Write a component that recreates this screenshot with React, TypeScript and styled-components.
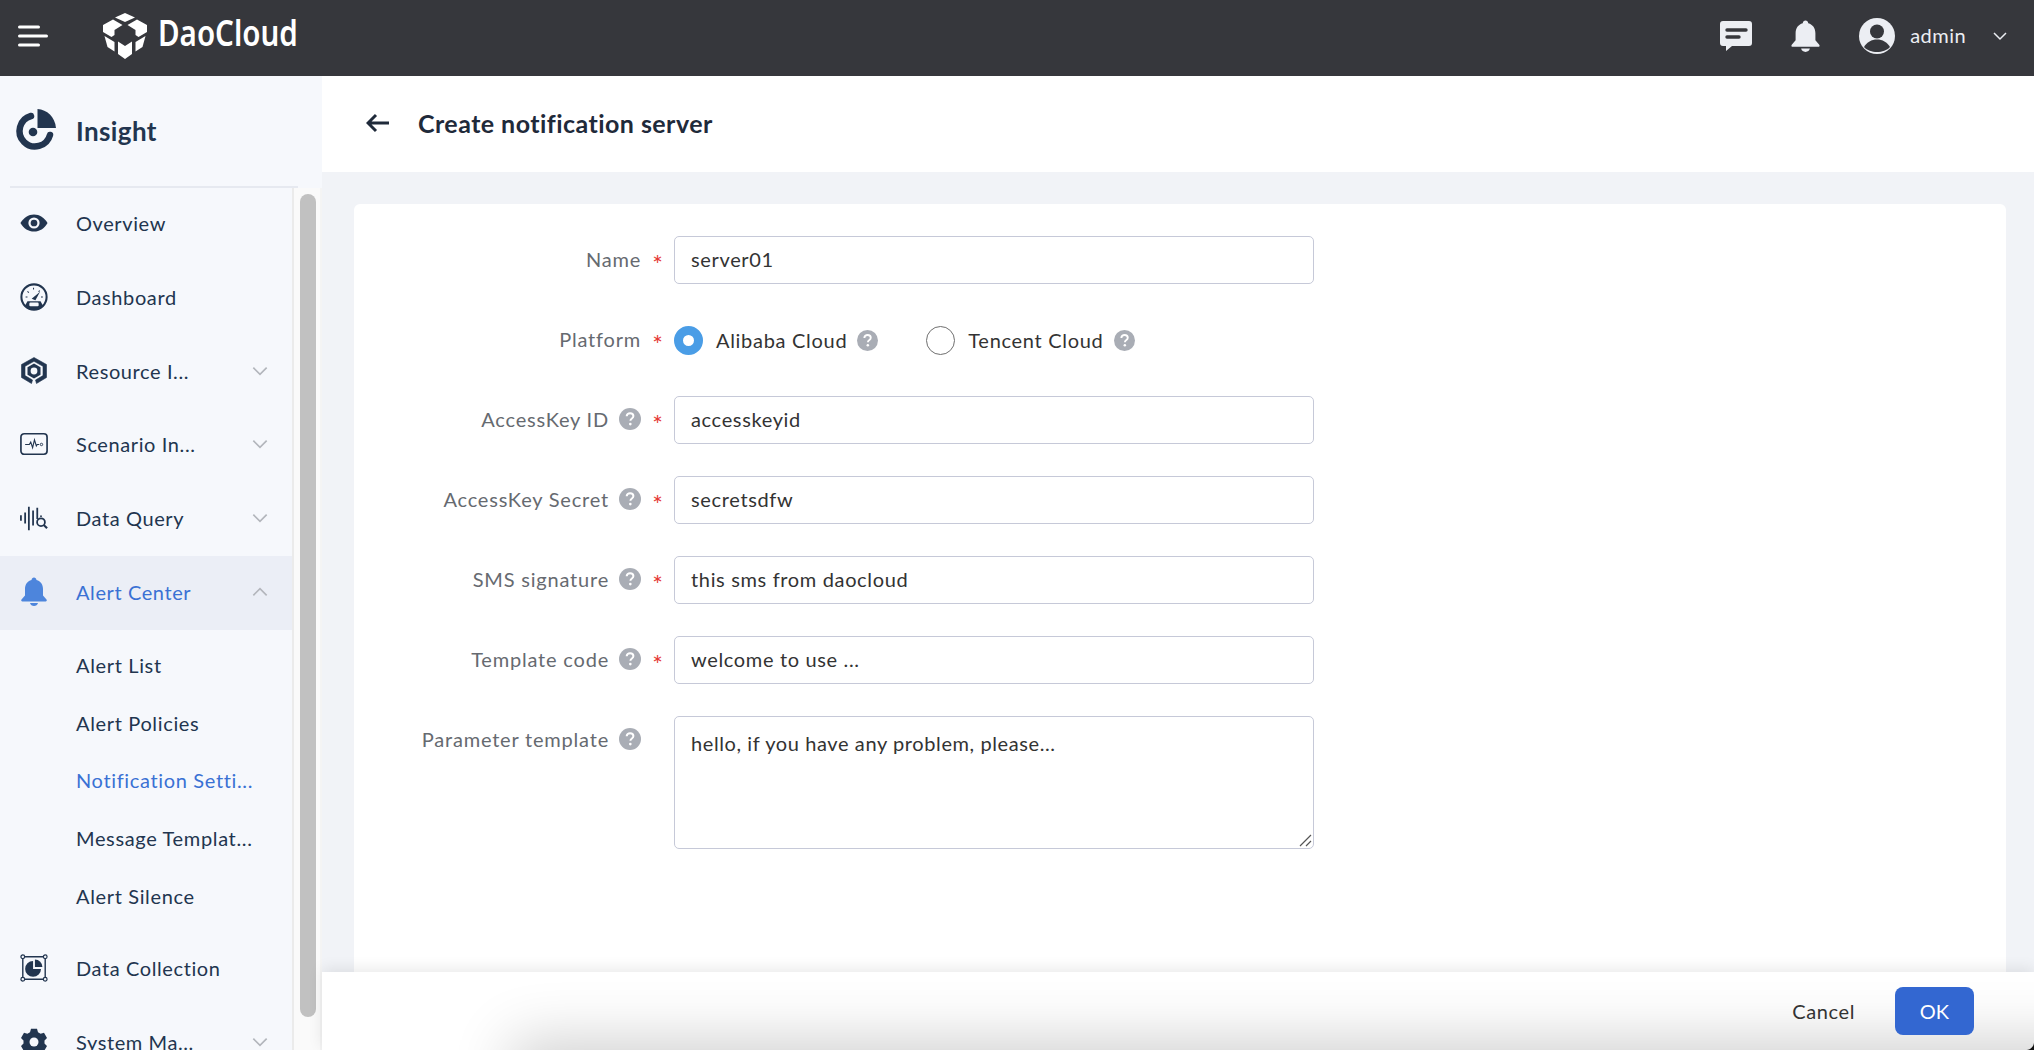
import React from 'react';
import styled, { createGlobalStyle } from 'styled-components';

const Global = createGlobalStyle`
  html, body { margin: 0; padding: 0; height: 100%; overflow: hidden; }
  body { font-family: Lato, "Noto Sans", "Liberation Sans", sans-serif; color: #333; }
  * { box-sizing: border-box; }
`;

const Page = styled.div`
  width: 2034px;
  height: 1050px;
  display: flex;
  flex-direction: column;
  overflow: hidden;
  position: relative;
  background: #f1f3f7;
`;

const TopBar = styled.header`
  height: 76px;
  flex: none;
  background: #36373c;
  display: flex;
  align-items: center;
  padding: 0 25px 4px 18px;
`;

const LogoLink = styled.div`
  display: flex;
  align-items: center;
  margin-left: 55px;
  gap: 11px;
`;

const LogoText = styled.span`
  font-family: "Noto Sans", sans-serif;
  font-size: 36px;
  font-weight: 600;
  line-height: 1;
  color: #fff;
  transform: translateY(-3px) scaleX(0.82);
  transform-origin: left center;
`;

const TopRight = styled.div`
  margin-left: auto;
  display: flex;
  align-items: center;
`;

const ChatIcon = styled.svg`
  margin-right: 38px;
`;

const BellIcon = styled.svg`
  margin-right: 38px;
`;

const AdminName = styled.span`
  font-size: 20px;
  color: #eceef3;
  margin: 0 25px 2px 15px;
  letter-spacing: 0.45px;
`;

const Body = styled.div`
  flex: 1;
  display: flex;
  min-height: 0;
`;

const Side = styled.aside`
  width: 322px;
  flex: none;
  background: #f6f8fc;
  display: flex;
  flex-direction: column;
  min-height: 0;
`;

const Brand = styled.div`
  height: 112px;
  flex: none;
  margin: 0 24px 0 10px;
  border-bottom: 2px solid #e6e9f0;
  display: flex;
  align-items: center;
  gap: 20px;
  padding: 0 0 1px 3px;
`;

const BrandName = styled.span`
  font-size: 26px;
  font-weight: 700;
  color: #22354f;
  letter-spacing: 0.4px;
`;

const NavRow = styled.div`
  flex: 1;
  display: flex;
  min-height: 0;
  overflow: hidden;
`;

const Nav = styled.nav`
  width: 292px;
  flex: none;
`;

const Track = styled.div`
  width: 30px;
  flex: none;
  background: #fafafa;
  border-left: 2px solid #ebebeb;
  border-right: 2px solid #f4f4f4;
  padding: 6px 4px 0 6px;
`;

const Thumb = styled.div`
  height: 823px;
  width: 16px;
  background: #c1c1c1;
  border-radius: 8px;
`;

const NavItem = styled.div<{ $active?: boolean }>`
  height: 73.7px;
  display: flex;
  align-items: center;
  padding: 0 22px 3px 20px;
  color: ${p => (p.$active ? '#3a71d4' : '#22354f')};
  background: ${p => (p.$active ? '#ebeef6' : 'transparent')};
  font-size: 20px;
  letter-spacing: 0.6px;
`;

const NavIcon = styled.span`
  width: 28px;
  height: 28px;
  flex: none;
  margin-right: 28px;
  display: flex;
  align-items: center;
  justify-content: center;
`;

const NavLabel = styled.span`
  flex: 1;
  white-space: nowrap;
`;

const SubItem = styled.div<{ $active?: boolean }>`
  height: 57.7px;
  display: flex;
  align-items: center;
  padding-left: 76px;
  color: ${p => (p.$active ? '#3a71d4' : '#22354f')};
  font-size: 20px;
  letter-spacing: 0.65px;
  white-space: nowrap;
`;

const SubList = styled.div`
  padding-top: 6px;
  padding-bottom: 8px;
`;

const Main = styled.main`
  flex: 1;
  min-width: 0;
  display: flex;
  flex-direction: column;
  position: relative;
`;

const PageHead = styled.div`
  height: 96px;
  flex: none;
  background: #fff;
  display: flex;
  align-items: center;
  padding: 0 0 2px 44px;
  gap: 28px;
`;

const PageTitle = styled.h1`
  margin: 0;
  font-size: 25px;
  font-weight: 700;
  color: #1f2a3a;
  letter-spacing: 0.45px;
`;

const Card = styled.section`
  flex: 1;
  margin: 32px 28px 0 32px;
  background: #fff;
  border-radius: 6px 6px 0 0;
  padding: 32px 0 0;
`;

const Row = styled.div<{ $tall?: boolean }>`
  display: flex;
  align-items: ${p => (p.$tall ? 'flex-start' : 'center')};
  min-height: 48px;
  margin-bottom: 32px;
`;

const LabelCell = styled.label<{ $tall?: boolean }>`
  width: 320px;
  flex: none;
  display: flex;
  justify-content: flex-end;
  align-items: center;
  gap: 10px;
  font-size: 20px;
  color: #666a70;
  padding: 0 6px 2px 0;
  margin-top: ${p => (p.$tall ? '10px' : '0')};
  letter-spacing: 0.8px;
`;

const Star = styled.span<{ $hidden?: boolean }>`
  width: 20px;
  color: #e53935;
  font-size: 25px;
  text-align: center;
  line-height: 1;
  visibility: ${p => (p.$hidden ? 'hidden' : 'visible')};
  margin-left: -3px;
  position: relative;
  top: 5px;
`;

const TextBox = styled.div`
  width: 640px;
  height: 48px;
  border: 1px solid #c6c9d8;
  border-radius: 5px;
  padding: 0 16px 2px;
  display: flex;
  align-items: center;
  font-size: 20px;
  color: #333;
  letter-spacing: 0.65px;
`;

const TextArea = styled.div`
  width: 640px;
  height: 133px;
  border: 1px solid #c6c9d8;
  border-radius: 5px;
  padding: 13px 16px;
  font-size: 20px;
  line-height: 26px;
  color: #333;
  letter-spacing: 0.6px;
  position: relative;
`;

const Grip = styled.svg`
  position: absolute;
  right: 1px;
  bottom: 1px;
`;

const RadioGroup = styled.div`
  display: flex;
  align-items: center;
  font-size: 20px;
  letter-spacing: 0.7px;
  color: #333;
`;

const RadioOption = styled.div`
  display: flex;
  align-items: center;
  margin-right: 48px;
`;

const RadioMark = styled.span<{ $on?: boolean }>`
  width: 29px;
  height: 29px;
  border-radius: 50%;
  flex: none;
  margin-right: 13px;
  background: #fff;
  border: ${p => (p.$on ? '9px solid #4a9de6' : '1px solid #6f6f6f')};
`;

const OptionHelp = styled.span`
  margin-left: 10px;
  display: flex;
`;

const Footer = styled.footer`
  position: absolute;
  left: 0;
  right: 0;
  bottom: 0;
  height: 78px;
  background: #fff;
  box-shadow: 0 -3px 14px rgba(0, 0, 0, 0.09);
  display: flex;
  align-items: center;
  justify-content: flex-end;
  padding: 0 60px 0 0;
  gap: 40px;
  overflow: hidden;
  &::before {
    content: '';
    position: absolute;
    left: 210px;
    right: -60px;
    top: 88px;
    height: 40px;
    box-shadow: 0 0 60px 20px rgba(0, 0, 0, 0.19);
    background: rgba(0, 0, 0, 0.19);
  }
`;

const CancelBtn = styled.span`
  position: relative;
  font-size: 20px;
  color: #333;
  letter-spacing: 0.6px;
`;

const OkBtn = styled.span`
  position: relative;
  width: 79px;
  height: 48px;
  border-radius: 8px;
  background: #3367d1;
  color: #fff;
  font-size: 20px;
  display: flex;
  align-items: center;
  justify-content: center;
`;

const Corner = styled.div`
  position: absolute;
  right: 0;
  bottom: 0;
  width: 8px;
  height: 8px;
  background: radial-gradient(circle at 0 0, transparent 7.5px, #111 8.5px);
`;

const Help = ({ size = 22 }: { size?: number }) => (
  <svg width={size} height={size} viewBox="0 0 20 20">
    <circle cx="10" cy="10" r="10" fill="#a9adb5" />
    <path d="M7 7.6c0-1.8 1.4-2.9 3.1-2.9 1.8 0 3 1.1 3 2.6 0 1.3-.8 1.9-1.6 2.5-.7.5-1.1.9-1.1 1.8" fill="none" stroke="#fff" strokeWidth="1.8" />
    <circle cx="10.3" cy="14.6" r="1.2" fill="#fff" />
  </svg>
);

const Chevron = ({ up, color = '#b3b6bc', size = 20 }: { up?: boolean; color?: string; size?: number }) => (
  <svg width={size} height={size} viewBox="0 0 18 18" fill="none">
    <path d={up ? 'M3 12l6-6 6 6' : 'M3 6l6 6 6-6'} stroke={color} strokeWidth="1.5" />
  </svg>
);

const Navy = '#22354f';

const icons: Record<string, React.ReactNode> = {
  eye: (
    <svg width="30" height="20" viewBox="0 0 30 20">
      <path d="M0.5 10C4 4 9 0.8 15 0.8S26 4 29.5 10C26 16 21 19.2 15 19.2S4 16 0.5 10Z" fill={Navy} />
      <circle cx="15" cy="10" r="6" fill="#f6f8fc" />
      <circle cx="15" cy="10" r="3.6" fill={Navy} />
    </svg>
  ),
  gauge: (
    <svg width="30" height="30" viewBox="0 0 30 30" fill="none">
      <circle cx="15" cy="15" r="13.5" stroke={Navy} strokeWidth="2.2" />
      <path d="M6 15h2M8 9l1.5 1.3M14.5 5v2M21 8l-1 1.5M24.5 15h-2" stroke={Navy} strokeWidth="1.1" />
      <path d="M12.500 17L21.500 9.500l-5 9z" fill={Navy} />
      <path d="M5 25l3-5.500h14l3 5.500c-2.500 2.500-6 4-10 4s-7.500-1.500-10-4z" fill={Navy} />
      <rect x="10" y="21" width="10" height="4" rx="1.200" fill="#f6f8fc" />
    </svg>
  ),
  hex: (
    <svg width="26" height="28" viewBox="0 0 26 28">
      <path d="M13 .5L25.500 7.500V20.500L15.500 26.500 14.500 23 22 18.600V9.300L13 4.300 4 9.300V18.600L11.500 23 10.500 26.500 .5 20.500V7.500Z" fill={Navy} stroke={Navy} strokeWidth=".6" />
      <path d="M13 6.500l6.500 3.700v7.500L13 21.500l-6.500-3.800v-7.500z" fill={Navy} />
      <circle cx="13" cy="14" r="3.400" fill="#f6f8fc" />
    </svg>
  ),
  monitor: (
    <svg width="30" height="24" viewBox="0 0 30 24" fill="none">
      <rect x="1" y="1" width="28" height="22" rx="3.500" stroke={Navy} strokeWidth="1.800" />
      <path d="M5.500 12.500h4.500l1.500-2.500 2 6 2-8.500 2 6.500 1-1.500h2" stroke={Navy} strokeWidth="1.200" />
      <circle cx="23" cy="12.500" r="1.300" stroke={Navy} />
    </svg>
  ),
  query: (
    <svg width="30" height="26" viewBox="0 0 30 26" fill="none">
      <path d="M1 10v6M5.500 7v12M9.500 1v25M14 5v16M18.500 2v12" stroke={Navy} strokeWidth="1.900" />
      <circle cx="22.500" cy="17.500" r="4.200" stroke={Navy} strokeWidth="1.900" />
      <path d="M25.500 20.500l3.500 3.500" stroke={Navy} strokeWidth="2.200" />
      <circle cx="22.500" cy="11" r="1" fill={Navy} />
    </svg>
  ),
  bell: (
    <svg width="28" height="30" viewBox="0 0 28 30">
      <path d="M14 .5c1.400 0 2.300 1 2.500 2.400C20.700 4 23 7.500 23 12v6.500l3.500 4c.7.900.2 1.900-.9 1.900H2.400c-1.100 0-1.600-1-.9-1.900l3.500-4V12c0-4.500 2.300-8 6.500-9.100C11.700 1.500 12.600.5 14 .5z" fill="#4d85dc" />
      <path d="M10 26h8c-.5 2-2 3-4 3s-3.500-1-4-3z" fill="#4d85dc" />
    </svg>
  ),
  collect: (
    <svg width="30" height="30" viewBox="0 0 30 30" fill="none">
      <path d="M3 3h24v24H3z" stroke={Navy} strokeWidth="1.500" />
      <g fill="#f6f8fc" stroke={Navy} strokeWidth="1.300">
        <circle cx="3" cy="3" r="2" />
        <circle cx="27" cy="3" r="2" />
        <circle cx="3" cy="27" r="2" />
        <circle cx="27" cy="27" r="2" />
      </g>
      <path d="M14 7.500v8.500h8.500A8.500 8.500 0 1 1 14 7.500z" fill={Navy} />
      <path d="M16 6v8h8A8 8 0 0 0 16 6z" fill={Navy} />
    </svg>
  ),
  gear: (
    <svg width="28" height="28" viewBox="0 0 28 28">
      <path d="M11 .8h6l1 3.400 2.600 1.500 3.400-.9 3 5.200-2.500 2.500v3l2.500 2.500-3 5.200-3.400-.9-2.600 1.500-1 3.400h-6l-1-3.400-2.600-1.500-3.400.9-3-5.200 2.500-2.500v-3L1 10l3-5.200 3.400.9L10 4.200z" fill={Navy} />
      <circle cx="14" cy="14" r="4.500" fill="#f6f8fc" />
    </svg>
  ),
};

const Fields: { label: string; value: string }[] = [
  { label: 'AccessKey ID', value: 'accesskeyid' },
  { label: 'AccessKey Secret', value: 'secretsdfw' },
  { label: 'SMS signature', value: 'this sms from daocloud' },
  { label: 'Template code', value: 'welcome to use ...' },
];

export default function App() {
  return (
    <Page>
      <Global />
      <TopBar>
        <svg width="30" height="24" viewBox="0 0 30 24">
          <path d="M1.500 3h19M1.500 12h27M1.500 21h19" stroke="#fff" strokeWidth="3" strokeLinecap="round" />
        </svg>
        <LogoLink>
          <svg width="44" height="46" viewBox="0 0 44 46">
            <g fill="#fff">
              <path d="M22 0l10 4.500-10 4.500-10-4.500z" />
              <path d="M10 6.500l9.500 5.500-8 5v5l-3 2-8.500-5V12z" />
              <path d="M34 6.500l-9.500 5.500 8 5v5l3 2 8.500-5V12z" />
              <path d="M1.500 23l10 6v9.500l-7-4.500z" />
              <path d="M42.500 23l-10 6v9.500l7-4.500z" />
              <path d="M15 28.500l7 4.500 7-4.500V41l-7 5-7-5z" />
            </g>
          </svg>
          <LogoText>DaoCloud</LogoText>
        </LogoLink>
        <TopRight>
          <ChatIcon width="32" height="30" viewBox="0 0 32 30">
            <path d="M3 0h26a3 3 0 0 1 3 3v19a3 3 0 0 1-3 3H12l-6 5v-5H3a3 3 0 0 1-3-3V3a3 3 0 0 1 3-3z" fill="#eceef3" />
            <path d="M7 9h19M7 16h12" stroke="#36373c" strokeWidth="3.400" strokeLinecap="round" />
          </ChatIcon>
          <BellIcon width="31" height="33" viewBox="0 0 28 30">
            <path d="M14 .5c1.400 0 2.300 1 2.500 2.400C20.700 4 23 7.500 23 12v6.500l3.500 4c.7.900.2 1.900-.9 1.900H2.400c-1.100 0-1.600-1-.9-1.900l3.500-4V12c0-4.500 2.300-8 6.500-9.100C11.700 1.500 12.600.5 14 .5z" fill="#eceef3" />
            <path d="M10 26h8c-.5 2-2 3-4 3s-3.500-1-4-3z" fill="#eceef3" />
          </BellIcon>
          <svg width="36" height="36" viewBox="0 0 36 36">
            <circle cx="18" cy="18" r="18" fill="#eceef3" />
            <circle cx="18" cy="13.500" r="7" fill="#36373c" />
            <path d="M5 29c3-5 7.500-7.500 13-7.500S28 24 31 29c-3 3.500-8 5-13 5S8 32.500 5 29z" fill="#36373c" />
          </svg>
          <AdminName>admin</AdminName>
          <Chevron color="#eceef3" size={18} />
        </TopRight>
      </TopBar>
      <Body>
        <Side>
          <Brand>
            <svg width="43" height="43" viewBox="0 0 43 43">
              <path d="M18 7A15.500 15.500 0 1 0 37 26" fill="none" stroke={Navy} strokeWidth="6.500" strokeLinecap="round" />
              <path d="M24.500 0C34 .5 42 8 43 19H24.500z" fill={Navy} />
              <circle cx="20" cy="23" r="4.300" fill={Navy} />
            </svg>
            <BrandName>Insight</BrandName>
          </Brand>
          <NavRow>
            <Nav>
              <NavItem><NavIcon>{icons.eye}</NavIcon><NavLabel>Overview</NavLabel></NavItem>
              <NavItem><NavIcon>{icons.gauge}</NavIcon><NavLabel>Dashboard</NavLabel></NavItem>
              <NavItem><NavIcon>{icons.hex}</NavIcon><NavLabel>Resource I...</NavLabel><Chevron /></NavItem>
              <NavItem><NavIcon>{icons.monitor}</NavIcon><NavLabel>Scenario In...</NavLabel><Chevron /></NavItem>
              <NavItem><NavIcon>{icons.query}</NavIcon><NavLabel>Data Query</NavLabel><Chevron /></NavItem>
              <NavItem $active><NavIcon>{icons.bell}</NavIcon><NavLabel>Alert Center</NavLabel><Chevron up /></NavItem>
              <SubList>
                <SubItem>Alert List</SubItem>
                <SubItem>Alert Policies</SubItem>
                <SubItem $active>Notification Setti...</SubItem>
                <SubItem>Message Templat...</SubItem>
                <SubItem>Alert Silence</SubItem>
              </SubList>
              <NavItem><NavIcon>{icons.collect}</NavIcon><NavLabel>Data Collection</NavLabel></NavItem>
              <NavItem><NavIcon>{icons.gear}</NavIcon><NavLabel>System Ma...</NavLabel><Chevron /></NavItem>
            </Nav>
            <Track><Thumb /></Track>
          </NavRow>
        </Side>
        <Main>
          <PageHead>
            <svg width="24" height="20" viewBox="0 0 24 20" fill="none">
              <path d="M23 10H2M10 2l-8 8 8 8" stroke="#1f2a3a" strokeWidth="3" />
            </svg>
            <PageTitle>Create notification server</PageTitle>
          </PageHead>
          <Card>
            <Row>
              <LabelCell>Name<Star>*</Star></LabelCell>
              <TextBox>server01</TextBox>
            </Row>
            <Row>
              <LabelCell>Platform<Star>*</Star></LabelCell>
              <RadioGroup>
                <RadioOption><RadioMark $on />Alibaba Cloud<OptionHelp><Help size={21} /></OptionHelp></RadioOption>
                <RadioOption><RadioMark />Tencent Cloud<OptionHelp><Help size={21} /></OptionHelp></RadioOption>
              </RadioGroup>
            </Row>
            {Fields.map(f => (
              <Row key={f.label}>
                <LabelCell>{f.label}<Help /><Star>*</Star></LabelCell>
                <TextBox>{f.value}</TextBox>
              </Row>
            ))}
            <Row $tall>
              <LabelCell $tall>Parameter template<Help /><Star $hidden>*</Star></LabelCell>
              <TextArea>
                hello, if you have any problem, please...
                <Grip width="14" height="14" viewBox="0 0 14 14" fill="none">
                  <path d="M2 13L13 2M8 13l5-5" stroke="#555" strokeWidth="1.200" />
                </Grip>
              </TextArea>
            </Row>
          </Card>
          <Footer>
            <CancelBtn>Cancel</CancelBtn>
            <OkBtn>OK</OkBtn>
          </Footer>
        </Main>
      </Body>
      <Corner />
    </Page>
  );
}
